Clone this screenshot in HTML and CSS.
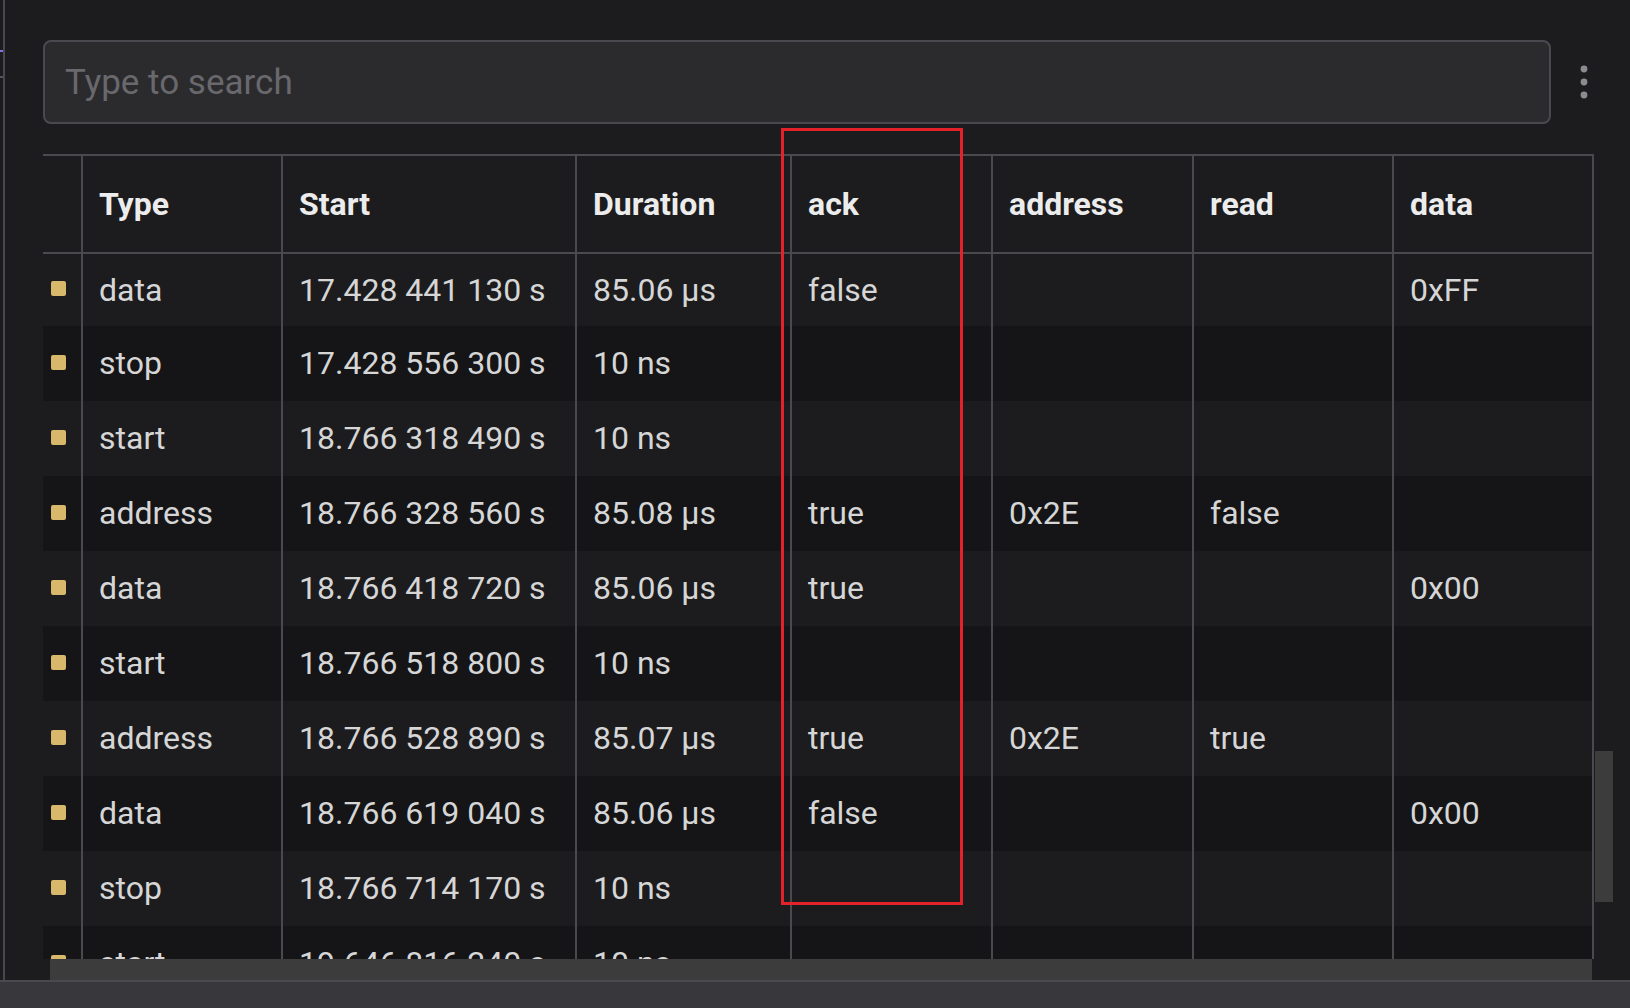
FILE: index.html
```html
<!DOCTYPE html>
<html lang="en">
<head>
<meta charset="utf-8">
<title>Data table</title>
<link rel="stylesheet" href="styles.css">
</head>
<body>
<div class="app">
  <div class="top">
    <div class="rail">
      <span class="tick tick-purple"></span>
      <span class="tick tick-gray"></span>
    </div>
    <div class="main">
      <div class="searchrow">
        <div class="search">Type to search</div>
        <div class="kebab">
          <svg width="10" height="36" viewBox="0 0 10 36"><circle cx="5" cy="5" r="3.4"/><circle cx="5" cy="18" r="3.4"/><circle cx="5" cy="31" r="3.4"/></svg>
        </div>
      </div>
      <div class="tablearea">
        <div class="viewport">
          <div class="table">
            <div class="row head">
              <div class="cell ind"></div>
              <div class="cell">Type</div>
              <div class="cell">Start</div>
              <div class="cell">Duration</div>
              <div class="cell">ack</div>
              <div class="cell">address</div>
              <div class="cell">read</div>
              <div class="cell">data</div>
            </div>
            <div class="row first">
              <div class="cell ind"><span class="sq"></span></div>
              <div class="cell">data</div><div class="cell">17.428 441 130 s</div><div class="cell">85.06 µs</div>
              <div class="cell">false</div><div class="cell"></div><div class="cell"></div><div class="cell">0xFF</div>
            </div>
            <div class="row alt">
              <div class="cell ind"><span class="sq"></span></div>
              <div class="cell">stop</div><div class="cell">17.428 556 300 s</div><div class="cell">10 ns</div>
              <div class="cell"></div><div class="cell"></div><div class="cell"></div><div class="cell"></div>
            </div>
            <div class="row">
              <div class="cell ind"><span class="sq"></span></div>
              <div class="cell">start</div><div class="cell">18.766 318 490 s</div><div class="cell">10 ns</div>
              <div class="cell"></div><div class="cell"></div><div class="cell"></div><div class="cell"></div>
            </div>
            <div class="row alt">
              <div class="cell ind"><span class="sq"></span></div>
              <div class="cell">address</div><div class="cell">18.766 328 560 s</div><div class="cell">85.08 µs</div>
              <div class="cell">true</div><div class="cell">0x2E</div><div class="cell">false</div><div class="cell"></div>
            </div>
            <div class="row">
              <div class="cell ind"><span class="sq"></span></div>
              <div class="cell">data</div><div class="cell">18.766 418 720 s</div><div class="cell">85.06 µs</div>
              <div class="cell">true</div><div class="cell"></div><div class="cell"></div><div class="cell">0x00</div>
            </div>
            <div class="row alt">
              <div class="cell ind"><span class="sq"></span></div>
              <div class="cell">start</div><div class="cell">18.766 518 800 s</div><div class="cell">10 ns</div>
              <div class="cell"></div><div class="cell"></div><div class="cell"></div><div class="cell"></div>
            </div>
            <div class="row">
              <div class="cell ind"><span class="sq"></span></div>
              <div class="cell">address</div><div class="cell">18.766 528 890 s</div><div class="cell">85.07 µs</div>
              <div class="cell">true</div><div class="cell">0x2E</div><div class="cell">true</div><div class="cell"></div>
            </div>
            <div class="row alt">
              <div class="cell ind"><span class="sq"></span></div>
              <div class="cell">data</div><div class="cell">18.766 619 040 s</div><div class="cell">85.06 µs</div>
              <div class="cell">false</div><div class="cell"></div><div class="cell"></div><div class="cell">0x00</div>
            </div>
            <div class="row">
              <div class="cell ind"><span class="sq"></span></div>
              <div class="cell">stop</div><div class="cell">18.766 714 170 s</div><div class="cell">10 ns</div>
              <div class="cell"></div><div class="cell"></div><div class="cell"></div><div class="cell"></div>
            </div>
            <div class="row alt">
              <div class="cell ind"><span class="sq"></span></div>
              <div class="cell">start</div><div class="cell">19.646 816 240 s</div><div class="cell">10 ns</div>
              <div class="cell"></div><div class="cell"></div><div class="cell"></div><div class="cell"></div>
            </div>
          </div>
        </div>
        <div class="vscroll"><div class="vthumb"></div></div>
      </div>
      <div class="hscroll"><div class="hthumb"></div></div>
    </div>
  </div>
  <div class="statusbar"></div>
</div>
<div class="highlight"></div>
</body>
</html>
```

FILE: styles.css
```css
html, body {
  margin: 0;
  padding: 0;
}
body {
  width: 1630px;
  height: 1008px;
  overflow: hidden;
  background: #1c1c1e;
  font-family: Roboto, "Liberation Sans", sans-serif;
  color: #d6d6d6;
  position: relative;
}
.app {
  display: flex;
  flex-direction: column;
  height: 1008px;
}
.top {
  flex: 1;
  display: flex;
  min-height: 0;
}
.rail {
  width: 3px;
  border-right: 2px solid #48474d;
  position: relative;
}
.tick {
  position: absolute;
  left: 0;
  width: 3px;
  height: 2px;
}
.tick-purple { top: 50px; background: #8a6ce8; }
.tick-gray { top: 76px; background: #55545a; }
.main {
  flex: 1;
  display: flex;
  flex-direction: column;
  padding: 40px 0 0 38px;
  min-width: 0;
}
.searchrow {
  display: flex;
  align-items: center;
  height: 84px;
}
.search {
  box-sizing: border-box;
  width: 1508px;
  height: 84px;
  border: 2px solid #4a4950;
  border-radius: 8px;
  background: #2b2b2e;
  color: #68686d;
  font-size: 35px;
  padding-left: 20px;
  display: flex;
  align-items: center;
}
.kebab {
  width: 66px;
  display: flex;
  justify-content: center;
  align-items: center;
}
.kebab svg { fill: #8c8c90; }
.tablearea {
  margin-top: 30px;
  height: 805px;
  display: flex;
}
.viewport {
  width: 1551px;
  height: 805px;
  overflow: hidden;
}
.table {
  border-top: 2px solid #4a4950;
  border-right: 2px solid #4a4950;
  width: 1549px;
}
.row {
  display: grid;
  grid-template-columns: 38px 200px 294px 215px 201px 201px 200px 200px;
  height: 75px;
  font-size: 32px;
}
.row.first { height: 71.6px; }
.row.alt { background: #151517; }
.row.head {
  height: 96px;
  border-bottom: 2px solid #4a4950;
  font-weight: 700;
  color: #ececec;
}
.cell {
  border-left: 2px solid #4a4950;
  padding-left: 16px;
  display: flex;
  align-items: center;
  white-space: nowrap;
}
.cell.ind {
  border-left: none;
  padding-left: 8px;
}
.sq {
  width: 15px;
  height: 15px;
  border-radius: 2px;
  background: #d8b86a;
  margin-top: -2px;
}
.vscroll {
  width: 18px;
  margin-left: 1px;
}
.vthumb {
  margin-top: 597px;
  height: 151px;
  background: #3c3c3d;
}
.hscroll {
  height: 21px;
  padding-left: 7px;
}
.hthumb {
  width: 1542px;
  height: 21px;
  background: #3c3c3d;
}
.statusbar {
  height: 26px;
  border-top: 2px solid #4a4950;
  background: #38373c;
}
.highlight {
  position: absolute;
  left: 781px;
  top: 128px;
  width: 176px;
  height: 771px;
  border: 3px solid #e4222a;
}
```
